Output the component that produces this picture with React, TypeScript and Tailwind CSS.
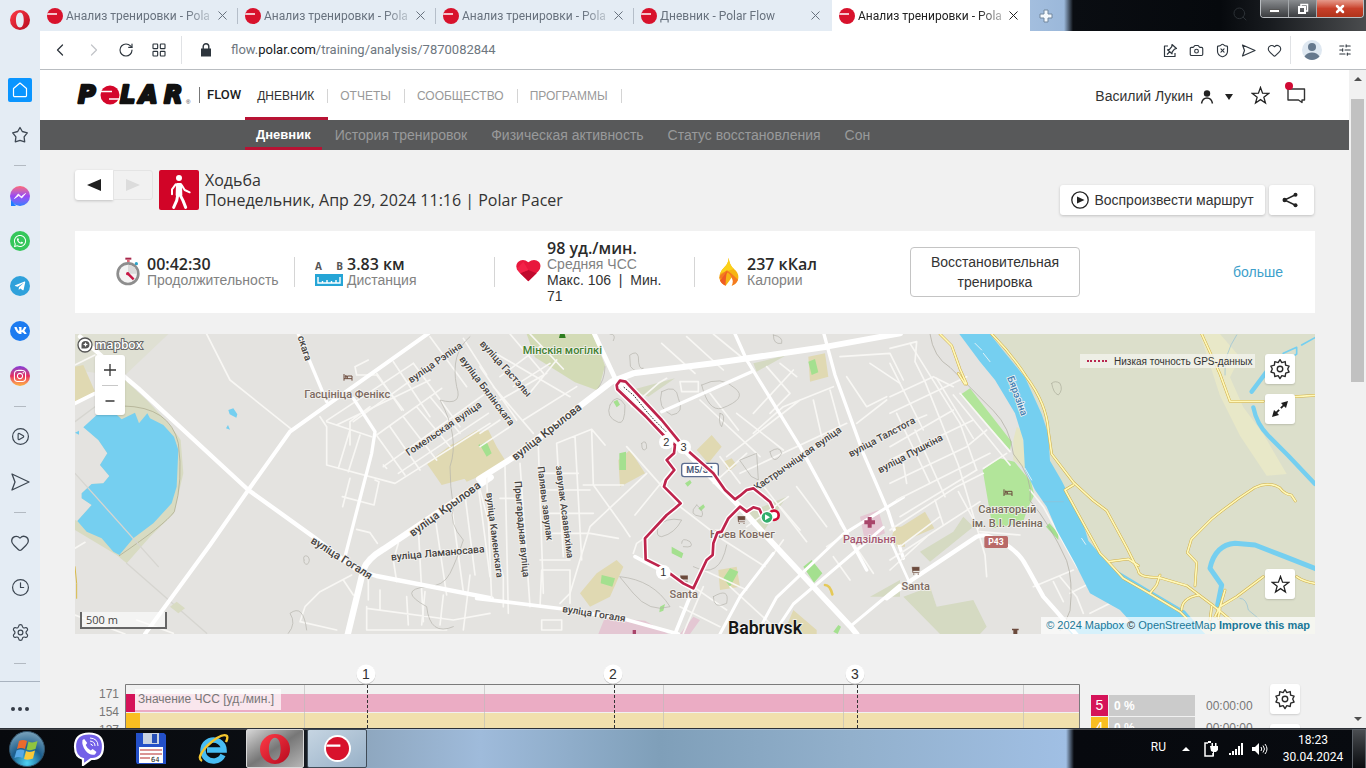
import React from "react";
import {
  Camera,
  ChevronLeft,
  ChevronRight,
  CirclePlay,
  Clock3,
  Heart,
  LayoutGrid,
  RotateCw,
  Search,
  Settings,
  ShieldX,
  SlidersHorizontal,
  X,
} from "lucide-react";
import { FaInstagram, FaTelegramPlane, FaVk, FaWhatsapp } from "react-icons/fa";

const UI = "font-['Open_Sans','Noto_Sans',sans-serif]";
const CHROME = "font-['Roboto','Noto_Sans',sans-serif]";
const ARIAL = "font-['Liberation_Sans',Arial,sans-serif]";

function OperaO({ className }: { className: string }) {
  return (
    <svg viewBox="0 0 32 32" className={className} aria-hidden="true">
      <defs>
        <linearGradient id="operaRed" x1="0" y1="0" x2="1" y2="1">
          <stop offset="0" stopColor="#ff3b47" />
          <stop offset="1" stopColor="#b60a1e" />
        </linearGradient>
      </defs>
      <path
        fillRule="evenodd"
        fill="url(#operaRed)"
        d="M16 0a16 16 0 1 0 0 32a16 16 0 1 0 0-32ZM16 4c4 0 6 5.500 6 12s-2 12-6 12s-6.500-5.500-6.500-12S12 4 16 4Z"
      />
    </svg>
  );
}

function PolarDot({ className }: { className: string }) {
  return (
    <svg viewBox="0 0 16 16" className={className} aria-hidden="true">
      <circle cx="8" cy="8" r="8" fill="#d8122c" />
      <path d="M0.500 5.200h9.500v1.500H0.200z" fill="#fff" />
    </svg>
  );
}

function GearIcon({ className }: { className: string }) {
  return (
    <svg viewBox="0 0 24 24" className={className} fill="none" stroke="#2a2a2a" strokeWidth="1.500" strokeLinejoin="round" aria-hidden="true">
      <path d="M12 1.800l2 3.200 3.700-1.100 .4 3.900 3.800 1.100-1.500 3.100 1.500 3.300-3.700 1.200-.5 3.700-3.700-.9-2 3.200-2-3.200-3.700.9-.5-3.700-3.700-1.200 1.500-3.300-1.500-3.100 3.800-1.100.4-3.900L10 5z" />
      <circle cx="12" cy="12" r="3" />
    </svg>
  );
}

function StarIcon({ className }: { className: string }) {
  return (
    <svg viewBox="0 0 24 24" className={className} fill="none" stroke="#222" strokeWidth="1.600" aria-hidden="true">
      <path d="M12 1.800l2.600 7.300 7.600.3-6 4.700 2.100 7.300-6.300-4.200-6.300 4.200 2.100-7.300-6-4.700 7.600-.3z" />
    </svg>
  );
}

/* ---------- Browser chrome ---------- */

function SideItem({ label, children }: { label: string; children: React.ReactNode }) {
  return (
    <button aria-label={label} className="flex h-[45px] w-full shrink-0 items-center justify-center text-[#3d4752]">
      {children}
    </button>
  );
}

function SideDivider() {
  return (
    <div className="flex h-4 shrink-0 items-center justify-center">
      <div className="h-px w-3 bg-[#b3bac2]" />
    </div>
  );
}

function Badge({ color, children }: { color: string; children: React.ReactNode }) {
  return <span className={`flex size-5 items-center justify-center rounded-full text-white ${color}`}>{children}</span>;
}

function Sidebar() {
  return (
    <aside className="flex w-10 shrink-0 flex-col bg-[#e4ecf4]">
      <button aria-label="Opera" className="flex h-[67px] shrink-0 justify-center pt-[10px]">
        <OperaO className="size-5" />
      </button>
      <SideItem label="Home">
        <span className="flex size-6 items-center justify-center rounded-[2px] bg-[#0a95ff] text-white">
          <svg viewBox="0 0 16 16" className="size-4" fill="none" stroke="currentColor" strokeWidth="1.200" strokeLinejoin="round" aria-hidden="true">
            <path d="M1.500 6.500L8 1l6.500 5.500V13.500a1.200 1.200 0 0 1-1.200 1.200H2.700a1.200 1.200 0 0 1-1.200-1.200z" />
          </svg>
        </span>
      </SideItem>
      <SideItem label="Bookmarks">
        <svg viewBox="0 0 18 18" className="size-[18px]" fill="none" stroke="currentColor" strokeWidth="1.300" strokeLinejoin="round" aria-hidden="true">
          <path d="M9 1.500l2.300 4 5 1.300-3.200 4 .6 5L9 14.300l-4.700 1.500.6-5-3.200-4 5-1.300z" />
        </svg>
      </SideItem>
      <SideDivider />
      <SideItem label="Messenger">
        <Badge color="bg-gradient-to-t from-[#1c7dff] via-[#9a45f2] to-[#ff6573]">
          <svg viewBox="0 0 20 20" className="size-5" aria-hidden="true">
            <path d="M1 14v6h5z" fill="#1c7dff" />
            <path d="M4.500 12.500L8.300 8l2.900 2.700L15.500 7.500 11.700 12 8.800 9.500z" fill="#fff" stroke="#fff" strokeWidth=".8" strokeLinejoin="round" />
          </svg>
        </Badge>
      </SideItem>
      <SideItem label="WhatsApp">
        <Badge color="bg-[#35c75a]">
          <FaWhatsapp className="size-[14px]" />
        </Badge>
      </SideItem>
      <SideItem label="Telegram">
        <Badge color="bg-[#2fa1db]">
          <FaTelegramPlane className="mr-px size-3" />
        </Badge>
      </SideItem>
      <SideItem label="VK">
        <Badge color="bg-[#1c7bf0]">
          <FaVk className="size-[13px]" />
        </Badge>
      </SideItem>
      <SideItem label="Instagram">
        <Badge color="bg-gradient-to-t from-[#fdb43c] via-[#e5275f] to-[#8433d8]">
          <FaInstagram className="size-[14px]" />
        </Badge>
      </SideItem>
      <SideDivider />
      <SideItem label="Player">
        <CirclePlay className="size-[19px]" strokeWidth={1.5} />
      </SideItem>
      <SideItem label="My Flow">
        <svg viewBox="0 0 20 20" className="size-5" fill="none" stroke="currentColor" strokeWidth="1.300" strokeLinejoin="round" aria-hidden="true">
          <path d="M2 2l17 8L2 18l3-8z" />
        </svg>
      </SideItem>
      <SideDivider />
      <SideItem label="Favourites">
        <Heart className="size-5" strokeWidth={1.5} />
      </SideItem>
      <SideItem label="History">
        <Clock3 className="size-[19px]" strokeWidth={1.5} />
      </SideItem>
      <SideItem label="Settings">
        <Settings className="size-[19px]" strokeWidth={1.5} />
      </SideItem>
      <SideDivider />
      <div className="mt-[10px] flex flex-1 justify-center border-t border-[#a9b3bf] pt-[25px]">
        <button aria-label="More" className="flex h-1 gap-[3px]">
          <span className="size-1 rounded-full bg-[#343c46]" />
          <span className="size-1 rounded-full bg-[#343c46]" />
          <span className="size-1 rounded-full bg-[#343c46]" />
        </button>
      </div>
    </aside>
  );
}

const tabs = [
  { title: "Анализ тренировки - Pola", active: false },
  { title: "Анализ тренировки - Pola", active: false },
  { title: "Анализ тренировки - Pola", active: false },
  { title: "Дневник - Polar Flow", active: false },
  { title: "Анализ тренировки - Pola", active: true },
];

function TabStrip() {
  return (
    <div className={`flex h-[31px] shrink-0 bg-[#e4ecf4] text-[12px] ${CHROME}`}>
      {tabs.map((t, i) => (
        <div
          key={i}
          className={`flex w-[198px] shrink items-center pl-[7px] pr-[9px] ${
            t.active ? "bg-white text-[#222]" : "text-[#68727e]"
          }`}
        >
          <PolarDot className="size-4 shrink-0" />
          <button className="ml-[3px] mr-auto text-left whitespace-nowrap [mask-image:linear-gradient(to_right,#000_120px,rgba(0,0,0,0.3)_144px)]">
            {t.title}
          </button>
          <button aria-label="Close tab" className="flex size-4 items-center justify-center">
            <X className="size-[15px]" strokeWidth={1.6} />
          </button>
          {i < 3 && <span className="ml-[7px] -mr-[9px] h-4 w-px bg-[#b5bec9]" />}
        </div>
      ))}
      <div className="flex min-w-0 flex-1 items-start bg-[linear-gradient(to_right,#a3bede_0px,#9bb8da_34px,#0a0d12_43px,#06090d_190px,#181b1f_240px,#4a4c4e_100%)]">
        <button aria-label="New tab" className="flex h-[31px] w-8 items-center justify-center">
          <svg viewBox="0 0 14 14" className="size-[14px]" aria-hidden="true">
            <path d="M5 1h4v4h4v4H9v4H5V9H1V5h4z" fill="#f4f8fc" stroke="#71869d" strokeWidth="1" />
          </svg>
        </button>
        <Search className="mt-[6px] mr-3 ml-auto size-4 text-[#2c3136]" strokeWidth={1.5} />
        <div className="mr-[2px] flex h-[18px] overflow-hidden rounded-b-[4px] border border-t-0 border-[#b9bdc1]">
          <button aria-label="Minimize" className="flex w-7 items-center justify-center border-r border-[#a4a8ab] bg-gradient-to-b from-[#8a8d90] to-[#3b3d40]">
            <span className="mt-1 h-1 w-[11px] border border-[#555] bg-white" />
          </button>
          <button aria-label="Restore" className="flex w-7 items-center justify-center border-r border-[#a4a8ab] bg-gradient-to-b from-[#8a8d90] to-[#3b3d40]">
            <svg viewBox="0 0 12 12" className="size-3" fill="none" stroke="#fff" strokeWidth="2" aria-hidden="true">
              <path d="M4 3V1.500h6.500V8H9" strokeWidth="1.500" />
              <path d="M2 4h6v6H2z" />
            </svg>
          </button>
          <button aria-label="Close" className="flex w-[46px] items-center justify-center bg-gradient-to-b from-[#e59a8b] via-[#c8402a] to-[#b0341b]">
            <X className="size-3 text-white" strokeWidth={5} />
          </button>
        </div>
      </div>
    </div>
  );
}

function AddressBar() {
  const icon = "size-[15px]";
  return (
    <div className="flex h-[39px] shrink-0 items-center border-b border-[#b9bdc1] bg-white pr-[14px] text-[#2d353d]">
      <button aria-label="Back" className="ml-[10px]"><ChevronLeft className="size-5" strokeWidth={1.5} /></button>
      <button aria-label="Forward" className="ml-[14px] text-[#c2c5c9]"><ChevronRight className="size-5" strokeWidth={1.5} /></button>
      <button aria-label="Reload" className="ml-[14px]"><RotateCw className="size-4" strokeWidth={1.7} /></button>
      <button aria-label="Speed dial" className="ml-[17px]"><LayoutGrid className="size-4" strokeWidth={1.7} /></button>
      <div className="ml-[14px] h-7 w-px bg-[#e0e2e5]" />
      <svg viewBox="0 0 12 14" className="ml-[18px] h-[14px] w-3" aria-label="Secure">
        <path d="M1 5.500h10v8H1z" fill="#2d353d" />
        <path d="M3.200 6V3.500a2.800 2.800 0 0 1 5.600 0V6" fill="none" stroke="#2d353d" strokeWidth="1.400" />
      </svg>
      <div className={`ml-[19px] flex-1 text-[13px] text-[#6e7780] ${CHROME}`}>
        flow.<span className="text-[#15191d]">polar.com</span>/training/analysis/7870082844
      </div>
      <div className="flex items-center gap-[11px]">
        <button aria-label="Share page">
          <svg viewBox="0 0 15 15" className={icon} fill="none" stroke="currentColor" strokeWidth="1.200" strokeLinejoin="round" aria-hidden="true">
            <path d="M5 3H1.500v10.500H12V10" />
            <path d="M9 1.500l4.500 4-2 .6-2.300 2.700-.2 2-4.500-4 2-.4L8.800 3.600zM6.600 8.800L4 11.500" />
          </svg>
        </button>
        <button aria-label="Snapshot"><Camera className={icon} strokeWidth={1.8} /></button>
        <button aria-label="Tracker blocker"><ShieldX className={icon} strokeWidth={1.8} /></button>
        <button aria-label="Send">
          <svg viewBox="0 0 15 15" className={icon} fill="none" stroke="currentColor" strokeWidth="1.200" strokeLinejoin="round" aria-hidden="true">
            <path d="M1.500 2l12.500 5.500-12.500 5.500 2-5.500z" />
          </svg>
        </button>
        <button aria-label="Favourite"><Heart className={icon} strokeWidth={1.8} /></button>
      </div>
      <div className="ml-2 h-7 w-px bg-[#e0e2e5]" />
      <button aria-label="Profile" className="ml-[11px]">
        <svg viewBox="0 0 20 20" className="size-5" aria-hidden="true">
          <circle cx="10" cy="10" r="10" fill="#dfe8f1" />
          <circle cx="10" cy="7" r="4" fill="#66798d" />
          <path d="M2.500 16.500Q5 12.500 10 12.500t7.500 4A10 10 0 0 1 2.500 16.500z" fill="#66798d" />
        </svg>
      </button>
      <button aria-label="Easy setup" className="ml-4"><SlidersHorizontal className="size-[14px]" strokeWidth={1.8} /></button>
    </div>
  );
}

/* ---------- Site header ---------- */

function SiteLogo() {
  return (
    <a href="#" aria-label="Polar" className="block">
      <svg viewBox="0 0 116 24" className="h-6 w-[116px]">
        <g className="font-['DejaVu_Sans',sans-serif] text-[24px] font-bold italic" fill="#111" stroke="#111" strokeWidth="2.500" strokeLinejoin="round">
          <text x="2" y="20">P</text>
          <text x="44" y="20">L</text>
          <text x="63" y="20">A</text>
          <text x="88" y="20">R</text>
        </g>
        <circle cx="34" cy="12" r="9.500" fill="#d4062b" />
        <path d="M24 8.500h12M33 16h11" stroke="#fff" strokeWidth="1.400" />
        <text x="110" y="21" className="font-['Liberation_Sans',sans-serif] text-[6px]" fill="#333">®</text>
      </svg>
    </a>
  );
}

function SiteHeader() {
  const items = ["ДНЕВНИК", "ОТЧЕТЫ", "СООБЩЕСТВО", "ПРОГРАММЫ"];
  const sub = ["Дневник", "История тренировок", "Физическая активность", "Статус восстановления", "Сон"];
  return (
    <header className={`shrink-0 ${ARIAL}`}>
      <div className="flex h-[50px] bg-white pl-9 pr-[42px]">
        <div className="flex items-center">
          <SiteLogo />
          <div className="ml-[7px] h-4 w-px bg-[#777]" />
          <span className="ml-[7px] font-['Roboto',sans-serif] text-[13px] font-medium text-[#1d1d1d]">FLOW</span>
        </div>
        <nav className="ml-1 flex items-stretch text-[12px]">
          {items.map((n, i) => (
            <a
              key={n}
              href="#"
              className={`flex items-center border-b-[3px] pt-1 ${
                i === 0 ? "border-[#b81334] text-[#333]" : "border-transparent text-[#999]"
              }`}
            >
              <span className="pr-[13px] pl-3">{n}</span>
              <span className="h-[14px] w-px bg-[#d4d4d4]" />
            </a>
          ))}
        </nav>
        <div className="ml-auto flex items-center text-[14px] text-[#333]">
          <button className="mt-[3px] flex items-center">
            Василий Лукин
            <svg viewBox="0 0 14 14" className="ml-[7px] size-[14px]" aria-hidden="true">
              <circle cx="7" cy="3.500" r="3.200" fill="#222" />
              <path d="M1.500 13.500Q2.500 8 7 8t5.500 5.500" fill="none" stroke="#222" strokeWidth="1.400" />
            </svg>
            <span className="ml-[11px] border-x-4 border-t-[6px] border-x-transparent border-t-[#222]" />
          </button>
          <button aria-label="Favourites" className="ml-[18px]">
            <StarIcon className="size-[19px]" />
          </button>
          <button aria-label="Notifications" className="relative ml-[15px]">
            <svg viewBox="0 0 22 18" className="h-[18px] w-[22px]" fill="none" stroke="#333" strokeWidth="1.400" aria-hidden="true">
              <path d="M3 3h16.500v11H17v2.500L13.500 14H3z" strokeLinejoin="round" />
            </svg>
            <span className="absolute -top-1 left-0 size-2 rounded-full bg-[#d10a34]" />
          </button>
        </div>
      </div>
      <nav className="flex h-[30px] bg-[#58595a] pl-[205px] text-[14px]">
        {sub.map((n, i) => (
          <a
            key={n}
            href="#"
            className={`mr-[2px] flex items-center border-b-[3px] px-[11px] pt-[3px] ${
              i === 0 ? "border-[#b81334] text-[13px] font-bold text-white" : "border-transparent text-[#999a9b]"
            }`}
          >
            {n}
          </a>
        ))}
      </nav>
    </header>
  );
}

/* ---------- Training heading and summary ---------- */

function TrainingHeading() {
  return (
    <div className="flex items-start pt-5">
      <div className="flex">
        <button aria-label="Previous" className="flex h-[30px] w-[38px] items-center justify-center rounded-l-[3px] bg-white shadow-[0_1px_3px_rgba(0,0,0,0.2)]">
          <svg viewBox="0 0 14 12" className="h-3 w-[14px]" aria-hidden="true"><path d="M14 0v12L0 6z" fill="#1f1f1f" /></svg>
        </button>
        <button aria-label="Next" className="flex h-[30px] w-10 items-center justify-center rounded-r-[3px] border border-[#e4e4e4] bg-[#f1f1f1]">
          <svg viewBox="0 0 14 12" className="h-3 w-[14px]" aria-hidden="true"><path d="M0 0v12L14 6z" fill="#dcdcdc" /></svg>
        </button>
      </div>
      <svg viewBox="0 0 120 120" className="ml-[6px] size-10 shrink-0" role="img" aria-label="Ходьба">
        <rect width="120" height="120" rx="6" fill="#d10427" />
        <g fill="none" stroke="#fff" strokeLinecap="round" strokeLinejoin="round">
          <circle cx="60" cy="24" r="9" fill="#fff" stroke="none" />
          <path d="M55 43h10l1 32H54z" fill="#fff" strokeWidth="8" />
          <path d="M50 43L39 58v15" strokeWidth="6" />
          <path d="M68 45l9 15 15 7" strokeWidth="6" />
          <path d="M56 76L53 92 44 112" strokeWidth="9" />
          <path d="M64 76l8 16 8 20" strokeWidth="9" />
        </g>
      </svg>
      <div className={`ml-[6px] text-[16px] leading-5 text-[#333] ${UI}`}>
        <h1>Ходьба</h1>
        <div>Понедельник, Апр 29, 2024 11:16 | Polar Pacer</div>
      </div>
      <div className={`mt-[15px] mr-px ml-auto flex gap-1 text-[14px] text-[#333] ${ARIAL}`}>
        <button className="flex h-[30px] w-[205px] items-center justify-center gap-[5px] rounded-[3px] bg-white shadow-[0_1px_3px_rgba(0,0,0,0.2)]">
          <svg viewBox="0 0 18 18" className="size-[18px]" aria-hidden="true">
            <circle cx="9" cy="9" r="8.200" fill="none" stroke="#222" strokeWidth="1.300" />
            <path d="M6 5.500v7L13.500 9z" fill="#222" />
          </svg>
          Воспроизвести маршрут
        </button>
        <button aria-label="Share" className="flex h-[30px] w-[45px] items-center justify-center rounded-[3px] bg-white pr-1 shadow-[0_1px_3px_rgba(0,0,0,0.2)]">
          <svg viewBox="0 0 16 16" className="size-4" aria-hidden="true">
            <path d="M14 2.500L2.500 8 14 13.500" fill="none" stroke="#222" strokeWidth="1.400" />
            <g fill="#222"><circle cx="2.700" cy="8" r="2.200" /><circle cx="13.500" cy="2.700" r="2" /><circle cx="13.500" cy="13.300" r="2" /></g>
          </svg>
        </button>
      </div>
    </div>
  );
}

function StopwatchIcon() {
  return (
    <svg viewBox="0 0 84 90" className="h-[30px] w-7" aria-hidden="true">
      <rect x="31" y="2" width="18" height="6" fill="#a8274b" />
      <rect x="36" y="8" width="8" height="8" fill="#e06b78" />
      <circle cx="64" cy="20" r="5" fill="#2ba4c9" />
      <circle cx="39" cy="50" r="31" fill="#f3f3f3" stroke="#8d8d8d" strokeWidth="8" />
      <path d="M39 23a27 27 0 0 1 27 27H39z" fill="#dadada" />
      <path d="M38 49l18 18" stroke="#c71745" strokeWidth="7" />
      <circle cx="38" cy="50" r="5" fill="#c71745" />
    </svg>
  );
}

function RulerIcon() {
  return (
    <span className="flex w-7 flex-col font-['Open_Sans',sans-serif] text-[10px] leading-4 font-bold text-[#555]">
      <span className="flex justify-between"><span>A</span><span>B</span></span>
      <svg viewBox="0 0 28 12" className="h-3 w-7" aria-hidden="true">
        <path d="M0 0h28v12H0z" fill="#25a5d6" />
        <path d="M3 3v6h22V3M7.500 9V7M12 9V6M16.500 9V7M21 9V6" fill="none" stroke="#fff" strokeWidth="1.400" />
      </svg>
    </span>
  );
}

function HeartIcon() {
  return (
    <svg viewBox="0 0 84 78" className="mb-1 h-[26px] w-7" aria-hidden="true">
      <path d="M40 73L10 42Q-2 28 9 15 24 2 40 16 57 2 72 15 82 28 70 43z" fill="#e8173d" />
      <path d="M40 39l25 10-25 24-25-24z" fill="#c00a2d" />
      <path d="M40 39L15 49 5 36 25 14z" fill="#f32248" />
    </svg>
  );
}

function FlameIcon() {
  return (
    <svg viewBox="0 0 60 90" className="h-[30px] w-5" aria-hidden="true">
      <path d="M29 2Q31 24 45 36 62 50 57 68 52 81 38 86 46 74 39 60 30 74 20 86 4 80 1 64 0 47 16 31 28 20 29 2z" fill="#f6b414" />
      <path d="M29 2Q31 24 45 36L4 49Q8 38 16 31 28 20 29 2z" fill="#fbd119" />
      <path d="M1 64Q13 67 25 47 33 49 37 61 46 74 38 86 52 81 57 68L38 50 24 40 4 54z" fill="#f47a20" />
      <path d="M3 70Q15 58 24 42 19 70 20 86 7 82 3 70z" fill="#ef5b24" />
    </svg>
  );
}

function Metric({
  icon,
  value,
  label,
  extra,
  last,
}: {
  icon: React.ReactNode;
  value: string;
  label: string;
  extra?: string;
  last?: boolean;
}) {
  return (
    <div className="flex w-[200px] items-center">
      <div className="ml-5 flex w-7 justify-center">{icon}</div>
      <div className="ml-1 min-w-0 flex-1 text-[14px] leading-4">
        <div className={`text-[16px] leading-4 font-semibold text-[#2b2b2b] ${UI}`}>{value}</div>
        <div className="text-[#828282]">{label}</div>
        {extra && <div className="w-32 text-[#333]">{extra}</div>}
      </div>
      {!last && <div className="h-[30px] w-px bg-[#d5d5d5]" />}
    </div>
  );
}

function Summary() {
  return (
    <section className={`mt-4 flex h-[82px] shrink-0 items-center bg-white pl-5 ${ARIAL}`}>
      <Metric icon={<StopwatchIcon />} value="00:42:30" label="Продолжительность" />
      <Metric icon={<RulerIcon />} value="3.83 км" label="Дистанция" />
      <Metric icon={<HeartIcon />} value="98 уд./мин." label="Средняя ЧСС" extra={"Макс. 106\u00a0 |\u00a0 Мин. 71"} />
      <Metric icon={<FlameIcon />} value="237 кКал" label="Калории" last />
      <button className="ml-[15px] h-[50px] w-[170px] rounded-[4px] border border-[#c4c4c4] px-4 text-[14px] leading-5 text-[#333]">
        Восстановительная тренировка
      </button>
      <a href="#" className="mr-8 ml-auto text-[14px] text-[#3d9fcb]">больше</a>
    </section>
  );
}

/* ---------- Map ---------- */

type LabelProps = { x: number; y: number; r?: number; s?: number; c?: string; bold?: boolean; children: string };

function MapLabel({ x, y, r = 0, s = 33, c = "#45423f", bold, children }: LabelProps) {
  return (
    <text
      transform={`translate(${x} ${y}) rotate(${r})`}
      dy="11"
      textAnchor="middle"
      fontSize={s}
      fontWeight={bold ? 600 : 500}
      fill={c}
      stroke="#f3f2ef"
      strokeWidth="5"
      paintOrder="stroke"
    >
      {children}
    </text>
  );
}

function Cart({ x, y }: { x: number; y: number }) {
  return (
    <g transform={`translate(${x} ${y})`} fill="#6b4a3c" stroke="#f3f2ef" strokeWidth="1">
      <path d="M0 2h24v13H5v3h18v3H2zM4 22h4v4H4zM18 22h4v4h-4z" />
    </g>
  );
}

function Bed({ x, y }: { x: number; y: number }) {
  return (
    <g transform={`translate(${x} ${y})`} fill="none" stroke="#6b4a3c" strokeWidth="3">
      <path d="M2 0v20M2 14h24v6M26 14V6H12v8M6 5h3v5H6z" />
    </g>
  );
}

function MapArt() {
  return (
    <svg
      viewBox="225 1002 3720 900"
      preserveAspectRatio="xMidYMid slice"
      className="block h-full w-full font-['Roboto','Noto_Sans',sans-serif]"
      role="img"
      aria-label="Карта маршрута"
    >
      <rect x="225" y="1002" width="3720" height="900" fill="#e4e3e0" />

      {/* West: reservoir and allotments */}
      <g transform="translate(210 990)" fill="none" strokeLinecap="round" strokeLinejoin="round">
        <path d="M165 150L230 210 300 285 332 330 340 430 312 550 240 620 170 700 140 675 15 600V560L80 250z" fill="#d8dbc2" />
        <path d="M15 290L40 292 85 330 112 370 90 405 118 438 100 460 65 462 35 490 35 505 65 525 22 573 15 570z" fill="#e4e3e0" />
        <path d="M15 12h280L160 140 15 120z" fill="#dfe0d3" />
        <path d="M15 110l25-5 35 80-60 30z" fill="#e0d9b2" />
        <path d="M80 255l50-10 25 23 40-20 12 32 25-30 8 15 40 20 32 35 13 40-5 110-15 50-55 60-60 45-42 50-18-10-35-40-45-20-28-32 43-48-30-20V490l30-28 35-2 18-22-28-33 22-35-27-40-45-38z" fill="#75cff0" />
        <path d="M475 240l15-5 12 18-3 10-20-10zM468 295l6-10 6 14zM15 308l12-6v12z" fill="#75cff0" />
        <path d="M160 228Q300 230 325 340q15 110-12 205-30 40-165 132" stroke="#a8a588" strokeWidth="2" />
        <path d="M15 275l60-45M15 430l250 280M170 700l240 210" stroke="#d6d5d0" strokeWidth="4" />
        <path d="M1070 400l80-60 40 105-75 20z M1140 350l80-50 40 25v100l-70 30-40-60z" fill="#e0d9b2" />
        <path d="M1225 345l20-10 25 35-20 15z" fill="#9fdc8c" />
        <path d="M300 830l20-15 25 20-20 15z" fill="#d8dbc2" />

        <g stroke="#f8f7f4" strokeWidth="5">
          <path d="M410 12l70 138 185 148M895 90l-40 20 5 25 60 0L1000 240M15 105l60-30M15 655l30-18" />
          <path d="M770 272L1030 100M800 285l280-135M840 345L840 275 900 230M920 315l195-140M940 410l300-215M985 430l270-180" />
          <path d="M920 130l75 110M970 95l110 165M1030 100l140 190M1080 20l110 150M1180 25l70 110M1150 60l-300 215" />
          <path d="M750 260l20 30 0 115 205 55 285-180M770 275l135 45M840 300L805 415M870 315L835 425M915 450l12 5-15 70-95-25M840 445l-22 85" />
          <path d="M915 310l90 125M960 290l90 130M1000 260l100 130M1040 230l100 120M1080 200l90 110M940 405l10 10" />
          <path d="M860 598l40 10 22 32M1045 595l15 280M1095 560l35 235M1145 530l35 255M1185 495l30 240M1225 470l35 270M985 640l-15 50 10 65M1200 735l-20 165" />
          <path d="M15 855l150 57M200 870l110 40M845 735L750 785 705 830 690 875 800 900M820 750l30 45M895 740v70M930 780v60M890 835l260 35 110-20M890 830v70h240M1010 800l5 85M1065 785l-10 100M1120 795l-10 90" />
        </g>
        <g stroke="#b4b2aa" strokeWidth="2">
          <path d="M1200 20q-60 50-40 150 20 60-50 40 60 110 30 200 0 60 10 120-15 50 30 100-20 60-40 100-20 40-70 40-90 10 0 60 10 90 80 60" />
          <path d="M702 690q-5-15 10-12 12 12 0 25-12 0-10-13M655 910q25-30 5-60 40-30 50 50" />
        </g>
        <path d="M15 710l5 50v45" stroke="#d8b948" strokeWidth="3" />
        <g stroke="#fff">
          <path d="M15 220l60-30" strokeWidth="11" />
          <path d="M30 20l145 130 30 25 330 305 195 140 130 100 60 18 345 67" strokeWidth="13" />
          <path d="M225 912l195-267 115-165 125-175 140-100L1075 10" strokeWidth="12" />
          <path d="M685 12l85 203M850 205l65 100-10 65-80 310" strokeWidth="10" />
          <path d="M833 914l47-194q10-32 60-62L1262 442" strokeWidth="19" />
        </g>
      </g>

      {/* Centre of the town */}
      <g transform="translate(1440 990)" fill="none" strokeLinecap="round" strokeLinejoin="round">
        <path d="M140 12h200l35 95-20 75-70-25-120-75z" fill="#d3dbb6" />
        <g fill="#e0d9b2">
          <path d="M0 305l25-5 25 50 25 40-75 50zM415 390l35-30 45 70-75 40zM650 360l45-45 30 35-40 50zM730 395l25-10 15 20-25 20zM985 80l50-10 10 70-55 15zM300 790l50-60 60-40 20 20-40 90-60 30zM715 720l55-10 10 60-60 10zM940 840l70 60v12h-100zM1245 590h30v60h-25z" />
        </g>
        <g fill="#a4e08f">
          <path d="M0 345l20-10 15 35-15 10zM418 370l20-5v55h-20zM985 95l20-8 10 40-20 8zM365 735l40 10-8 25-35-10zM575 650l35 20-5 15-30-15zM730 745l20-30 25 10-25 45zM970 710l25-20 32 40-25 28zM400 215l12-6 8 15-10 8zM615 460l15-10 5 8-12 12zM655 535l15-12 5 8-12 12zM540 830l15-8-5 20-12 5zM1060 905l15-20 8 5-10 22z" />
        </g>
        <path d="M375 862l120 10 70 40H355zM640 860l20 10-30 42h-30zM1140 560l55-20 20 70-60 25z" fill="#e4c7d3" />
        <path d="M455 180l130-35-80 55zM820 100l100-25-90 50zM800 550l120-50-80 120zM1170 800l90-50v50z" fill="#d5dac2" />

        <g stroke="#f8f7f4" strokeWidth="5">
          <path d="M90 12L190 130M150 12l100 105M0 110l110 160M40 170l120 140M100 170l110-70M60 210L200 130M130 270L290 170M0 350l90-60M0 310l60-40M30 60L270 200M180 50L60 140M230 90l-90 110" />
          <path d="M230 340L335 298 375 345M335 300l5 165 90 125 20 30M175 350l15 440M230 340l20 340M285 320l20 370M75 410l10 440M20 440l15 370M120 400l30 430M195 430h100M190 480h140M190 550h150M200 610h130l85 15M180 690h90M190 720h80v100M180 830l5-110M60 505h65M310 465h120M0 480l70 260 0 90M185 870h60v30h-60z" />
          <path d="M440 350l160 180 130 100 125 80M500 430L330 590 270 790 240 820M575 420L465 555M460 670L470 640 500 620" />
          <path d="M455 230l80-70 25-15M600 155h55v30h-50zM545 40l100 90M620 20l110 100M700 12l110 90M660 210l180 170M690 190l85 110M820 310L910 230 1060 170M740 380L960 210M780 430L1100 280M770 250l140 110M820 250L940 120M860 110l70 80-60 60M900 100l50 40" />
          <path d="M925 500L800 590M840 455l140 180M950 470l90 120M1050 180l30 110M1000 210l25 110M1100 140l60 90 60-30M1170 100l90 60M1080 80l150-10 40 80M1070 300l-140 110M1130 280l90-70" />
          <path d="M700 460l100-90M720 380l60 80M640 770l100 70M600 830l120 60M670 720l130 60M670 770l-60 140M750 770l120 110M1040 650l90-60M1080 580l100 150M1060 680l50 70M900 530l60 70M860 700l50-70" />
        </g>
        <g stroke="#b4b2aa" strokeWidth="2">
          <path d="M450 75q20-15 25 5 0 40 15 35-20 20-38-5zM390 12q20 0 10 20M880 15q30 5 25 25-25 5-25-25M390 225q20-40 45 0 0 60-20 52-40-15-25-52M545 185q45-25 50 20 20 45-20 50-45-20-30-70M665 165q60-30 100 10 40 30-40 60-40 10-60-70M720 250q20 0 5 40-10-10-5-40M485 340q15-15 15 15-15 15-15-15M650 525q25 20 15 35-45-5-15-35M535 590q20-30 70-20-20 40-60 50-20 0-10-30M605 640q0-20 25-5 15 20-20 15M780 390l50-20 5 80-20-10zM870 365q30-20 35 5-25 40-35-5M420 740q100 10 150 90-60 20-110-40zM700 800q50-30 40 20-40 20-40-20M640 710q80 40 100-65M350 180q25-30 25-70" />
        </g>
        <g stroke="#fff">
          <path d="M340 5l65 140" strokeWidth="14" />
          <path d="M-3 447l103-65L395 155l65-25 240-30 340-50 220-40" strokeWidth="18" />
          <path d="M545 245l270-120M762 5l38 85L960 350l60 110 140 260M1030 5l35 130L1150 370l75 175 45 140" strokeWidth="10" />
          <path d="M410 150L770 520l90 100L1110 888l20 24" strokeWidth="17" />
          <path d="M-10 805l260 32 190 32 155 43M465 680l175 92M640 775L585 912" strokeWidth="11" />
          <path d="M720 912L780 800 880 670M830 912l60-110 200-190 180-110M880 912l60-90 270-230M1110 890l150-125M790 912l70-30" strokeWidth="9" />
        </g>
        <path d="M1035 765q15 0 22 28" stroke="#e5c958" strokeWidth="8" />
      </g>

      {/* River, forest and floodplain */}
      <g transform="translate(2670 990)" fill="none" strokeLinecap="round" strokeLinejoin="round">
        <path d="M290 12h990v900H870L690 790 560 610 490 430 440 230z" fill="#dcdfcb" />
        <path d="M930 12h60l60 70-30 60 40 90 60 80 70 120-60 5-80-120-60-120z" fill="#e8e8c8" />
        <path d="M210 195l30-20 125 160-5 25zM278 420l50-35 45 10 50 60 10 40-20 40-15 45-60 10-30 5z" fill="#b2e59a" />
        <path d="M468 590l10-10 27 30 0 20z" fill="#a4e08f" />
        <path d="M370 330l10-40 15 10 15 120-40-30z" fill="#e5e5c5" />
        <path d="M10 605l95-60 28 50-60 25-45 25-28-5z" fill="#e0d9b2" />
        <path d="M90 665l100-60 30-45 30 30-130 105zM40 800l80-30 20 60 110-20 40 80-20 22H150z" fill="#d5dac2" />
        <g stroke="#f8f7f4" strokeWidth="5">
          <path d="M0 55l80-20-5 60 30 60 100 250 80 270 5 65M0 200l130-60 60 30M0 250l230-110M0 300l110-45M0 350l190-110M0 390l250-120M0 460l230-110 60-50M20 510l280-140M30 560l230-140M0 600l200-130 80-40M0 690l270-175" />
          <path d="M60 40l150 240 50 140M0 100l100 200M20 250l100 210M40 400l10 60M140 145l110 180M75 300l90 200M135 510l25 75M205 485l60 110M190 195l170 210M350 370l-70 45M210 190l150 175M30 650l120-90M0 720l110-100" />
          <path d="M420 480l40 50 100 180 80 90 40 10M390 615l-120-10M430 770l120-50M490 755l30 60M510 740l50 60 20 50M540 790l60-30M600 850l80-40 60 60M650 810l-20-60M690 870l10 42" />
        </g>
        <path d="M120 12q10 70 60 100 60 60 130 130 50 50 60 130 60 70 50 140 60 70 110 180 20 60 10 150-20 50-30 60" stroke="#aaa89d" strokeWidth="2" />
        <path d="M208 12h92l40 50 65 80 50 110 20 60 5 80 35 60 65 130 15 50 70 80 100 60 120 70 60 70H755L690 840 600 790 555 700 500 600 470 530 435 480 405 420 400 330 375 250 315 150 270 95z" fill="#75cff0" />
        <path d="M255 40l20 20M280 70l20 25M575 625l12 18M405 415l20 35" stroke="#dff1f7" strokeWidth="3" />
        <path d="M530 895l355-32 60 49H545z" fill="#75cff0" />
        <g stroke="#75cff0">
          <path d="M1195 85L1130 125 1085 185M1090 232q10 50 45 85l60 60 80 85" strokeWidth="13" />
          <path d="M1180 70l40-18v20l-50 35zM1235 45l40-22" strokeWidth="5" />
          <path d="M1275 715l-90-35-90-35-60-5q-60 5-75 75l35 50-12 60" strokeWidth="15" />
        </g>
        <path d="M1040 15q-40 60-35 120M1050 805q20 0 25 35l30 25 30 40M520 515l-60 0" stroke="#8fc0d8" strokeWidth="2" />
        {["#cfae46", "#fff8b8"].map((c, i) => (
          <g key={c} stroke={c} strokeWidth={i === 0 ? 8 : 5}>
            <path d="M150 12l35 35 25 70 20 45M205 130l20 32M305 12q60 60 105 130 60 80 65 160l10 70 65 85 60 55 40 30 60 110 35 70q0 20 60 20l85 25q40 30 80 60l60 50" />
            <path d="M550 465l-25 15 55 100 50 90 25 25 60-8 30 20M640 680l60 65 70 40 100 60 20 20M810 735l-10 30-20 25M875 840q0-35 50-45M915 768l5-70-28-30 12-40 60-60q60-50 130-95 40-20 75 0 15 20 35 22l12 18" />
            <path d="M935 12l55 120 30 82h100M1215 200l60-4M990 830l50-30 60-45 20-15M1220 740q20 15 55 20M1005 780l-15 50-15 30M965 830l-5 40M990 835l-5 30" />
          </g>
        ))}
        <path d="M485 160q10-10 25 0 10 20-5 35-15-5-20-35" stroke="#a9aa99" strokeWidth="2" />
        <g stroke="#fff">
          <path d="M-10 805L65 750l195-130q20-8 40 0 80 30 110 90l50 90 40 45 60 70" strokeWidth="13" />
          <path d="M5 640l50 110" strokeWidth="8" />
        </g>
      </g>

      {/* Street and place names */}
      <g transform="translate(210 990)">
        <MapLabel x={705} y={54} r={72} s={30}>скага</MapLabel>
        <Bed x={820} y={132} />
        <MapLabel x={832} y={192} c="#7d6b62">Гасцініца Фенікс</MapLabel>
        <MapLabel x={1095} y={97} r={-35} s={30}>вуліца Рэпіна</MapLabel>
        <MapLabel x={1252} y={182} r={53} s={30}>вуліца Бялінскага</MapLabel>
        <MapLabel x={1120} y={295} r={-34} s={30}>Гомельская вуліца</MapLabel>
        <MapLabel x={1125} y={537} r={-36} s={34}>вуліца Крылова</MapLabel>
        <MapLabel x={1103} y={668} r={-5} s={31}>вуліца Ламаносава</MapLabel>
        <MapLabel x={815} y={684} r={32}>вуліца Гогаля</MapLabel>
      </g>
      <g transform="translate(1440 990)">
        <MapLabel x={78} y={115} r={48} s={30}>вуліца Гастэлы</MapLabel>
        <path d="M240 12h14l3 12h-20z" fill="#2e7d1f" />
        <MapLabel x={247} y={60} c="#44822f">Мінскія могілкі</MapLabel>
        <MapLabel x={200} y={306} r={-38} s={34}>вуліца Крылова</MapLabel>
        <MapLabel x={255} y={545} r={83} s={29}>завулак Асаавіяхіма</MapLabel>
        <MapLabel x={197} y={520} r={83} s={29}>Палявы завулак</MapLabel>
        <MapLabel x={127} y={597} r={85} s={30}>Прыгарадная вуліца</MapLabel>
        <MapLabel x={45} y={615} r={83} s={29}>вуліца Каменскага</MapLabel>
        <MapLabel x={342} y={850} r={9} s={30}>вуліца Гогаля</MapLabel>
        <MapLabel x={952} y={385} r={-35} s={30}>Кастрычніцкая вуліца</MapLabel>
        <MapLabel x={1205} y={320} r={-28} s={30}>вуліца Талстога</MapLabel>
        <MapLabel x={1290} y={370} r={-28} s={30}>вуліца Пушкіна</MapLabel>
        <MapLabel x={787} y={613} c="#7d6b62">Ноев Ковчег</MapLabel>
        <MapLabel x={611} y={792} c="#7d6b62">Santa</MapLabel>
        <MapLabel x={855} y={902} s={53} c="#151515" bold>Babruysk</MapLabel>
        <MapLabel x={1168} y={628} c="#a3566f">Радзільня</MapLabel>
        <path d="M1163 561h12v10h10v12h-10v10h-12v-10h-10v-12h10z" fill="#a8456a" />
        <path d="M458 900h10v12h-10z" fill="#a8456a" />
        <Cart x={772} y={556} />
        <Cart x={600} y={734} />
        <rect x="605" y="400" width="110" height="40" rx="8" fill="#fff" stroke="#5b6c8f" strokeWidth="4" />
        <text x="660" y="430" textAnchor="middle" fontSize="27" fontWeight="700" fill="#4d5a78">M5/Э1</text>
      </g>
      <g transform="translate(2670 990)">
        <MapLabel x={383} y={197} r={70} s={30} c="#3d7fb5">Бярэзіна</MapLabel>
        <Bed x={340} y={478} />
        <MapLabel x={352} y={538} c="#766a5c">Санаторый</MapLabel>
        <MapLabel x={352} y={581} c="#766a5c">ім. В.І. Леніна</MapLabel>
        <rect x="283" y="618" width="71" height="36" rx="5" fill="#b96a68" />
        <text x="318" y="645" textAnchor="middle" fontSize="26" fontWeight="700" fill="#fff">P43</text>
        <Cart x={65} y={708} />
        <MapLabel x={77} y={768} c="#7d6b62">Santa</MapLabel>
        <path d="M366 896h20v5h-4v12h-12v-12h-4z" fill="#6b4a3c" />
      </g>

      {/* Recorded route */}
      <g transform="translate(1440 990)" fill="none" strokeLinejoin="round" strokeLinecap="round">
        {["#ffffff", "#be244c"].map((c, i) => (
          <path
            key={c}
            stroke={c}
            strokeWidth={i === 0 ? 16 : 8}
            d="M878 532L870 515 820 475 800 480 780 497 765 508 735 480 700 430 610 350 590 325 545 270 437 155 420 152 410 165 412 178 500 262 550 315 585 345 582 370 560 390 583 420 558 450 552 470 602 520 585 535 560 555 495 625 497 688 545 712 610 760 640 775 680 690 698 675 700 640 712 608 725 605 745 565 780 530 800 545 820 532 838 537 845 552"
          />
        ))}
        <path d="M432 172L555 302" stroke="#fff" strokeWidth="14" />
        <path d="M432 172l30 25 40 50 20 22 35 35" stroke="#333" strokeWidth="3" strokeDasharray="3 6" />
        <circle cx="882" cy="556" r="14" fill="#fff" stroke="#d10a34" strokeWidth="8" />
        <circle cx="861" cy="562" r="18" fill="#33ae6c" stroke="#fff" strokeWidth="4" />
        <path d="M855 553v18l15-9z" fill="#fff" />
        {[
          [550, 727, "1"],
          [559, 336, "2"],
          [611, 351, "3"],
        ].map(([x, y, n]) => (
          <g key={n}>
            <circle cx={x} cy={y} r="22" fill="#fff" />
            <text x={x} y={Number(y) + 12} textAnchor="middle" fontSize="33" fill="#333" className="font-['Liberation_Sans',sans-serif]">{n}</text>
          </g>
        ))}
      </g>
    </svg>
  );
}

const mapBtn = "flex size-[30px] items-center justify-center rounded-[3px] bg-white shadow-[0_1px_2px_rgba(0,0,0,0.15)]";

function RouteMap() {
  return (
    <section className="relative mt-[21px] h-[300px] shrink-0 overflow-hidden">
      <MapArt />
      <div className="absolute top-[3px] left-[2px] flex items-center gap-[2px]">
        <svg viewBox="0 0 16 16" className="size-4" aria-hidden="true">
          <circle cx="8" cy="8" r="7" fill="#fff" stroke="#555" strokeWidth="1.300" />
          <path d="M4.500 11.500V7.500a4 3.800 0 1 1 4 4z" fill="#555" />
          <path d="M8.500 5l.8 1.700 1.700.8-1.700.8-.8 1.700-.8-1.700L6 7.500l1.700-.8z" fill="#fff" />
        </svg>
        <span className="font-['Open_Sans',sans-serif] text-[12px] leading-4 font-semibold text-white [paint-order:stroke] [-webkit-text-stroke:2px_#666]">mapbox</span>
      </div>
      <div className="absolute top-[21px] left-5 flex w-[30px] flex-col items-center rounded-[3px] bg-white shadow-[0_1px_2px_rgba(0,0,0,0.15)]">
        <button aria-label="Zoom in" className="flex size-[30px] items-center justify-center">
          <svg viewBox="0 0 12 12" className="size-3" stroke="#333" strokeWidth="1.300" aria-hidden="true"><path d="M6 0v12M0 6h12" /></svg>
        </button>
        <span className="h-px w-4 bg-[#c8c8c8]" />
        <button aria-label="Zoom out" className="flex h-[29px] w-[30px] items-center justify-center">
          <svg viewBox="0 0 12 12" className="size-3" stroke="#444" strokeWidth="1.600" aria-hidden="true"><path d="M1.500 6h9" /></svg>
        </button>
      </div>
      <div className={`absolute bottom-[5px] left-[5px] h-[17px] w-[87px] border-2 border-t-0 border-[#666] bg-white/60 pl-1 text-[11px] leading-4 text-[#444] ${UI}`}>
        500 m
      </div>
      <div className={`absolute top-5 right-[60px] flex h-[14px] w-[175px] items-center bg-[#f2f3ec]/80 pl-[7px] text-[10px] text-[#333] ${ARIAL}`}>
        <span className="mr-[7px] w-5 border-t-2 border-dotted border-[#b8254f]" />
        Низкая точность GPS-данных
      </div>
      <div className="absolute top-5 right-5 flex flex-col gap-[10px]">
        <button aria-label="Map settings" className={mapBtn}><GearIcon className="size-[22px]" /></button>
        <button aria-label="Full screen" className={mapBtn}>
          <svg viewBox="0 0 18 18" className="size-[18px]" fill="#1d1d1d" aria-hidden="true">
            <path d="M17 1l-2 7-2-1.800L10.500 8.800 9.200 7.500l2.600-2.600L10 3zM1 17l2-7 2 1.800 2.500-2.600 1.300 1.300-2.600 2.600L8 15z" />
          </svg>
        </button>
      </div>
      <button aria-label="Favourite route" className={`absolute top-[235px] right-5 ${mapBtn}`}><StarIcon className="size-[19px]" /></button>
      <div className={`absolute right-0 bottom-0 h-[17px] bg-white/70 px-[5px] text-[11px] leading-4 text-[#333] ${ARIAL}`}>
        <a href="#" className="text-[#1a7898]">© 2024 Mapbox</a> © <a href="#" className="text-[#1a7898]">OpenStreetMap</a>{" "}
        <a href="#" className="font-bold text-[#1a7898]">Improve this map</a>
      </div>
    </section>
  );
}

/* ---------- Heart-rate chart ---------- */

function HeartRate() {
  const zones = [
    { n: "5", color: "bg-[#d51359]" },
    { n: "4", color: "bg-[#f9be21]" },
  ];
  return (
    <section className={`flex shrink-0 ${ARIAL}`}>
      <svg viewBox="75 634 1010 120" preserveAspectRatio="xMinYMin slice" className="h-[120px] min-w-0 flex-1" role="img" aria-label="Значение ЧСС [уд./мин.]">
        <rect x="126" y="694" width="953" height="18" fill="#ebacc4" />
        <rect x="126" y="713" width="953" height="18" fill="#f1e0ad" />
        <rect x="126" y="731" width="953" height="24" fill="#d8e4b4" />
        <rect x="126" y="694" width="9" height="18" fill="#d51359" />
        <rect x="126" y="713" width="14" height="18" fill="#f9be21" />
        <path d="M304.500 685v70M484.500 685v70M663.500 685v70M843.500 685v70M1023.500 685v70" stroke="#bbb" strokeOpacity=".6" />
        <path d="M367.500 685v70M614.500 685v70M857.500 685v70" stroke="#333" strokeDasharray="3 2" />
        <path d="M125.500 755V684.500h954V755" fill="none" stroke="#7b7b7b" />
        <rect x="135" y="689" width="146" height="21" fill="#fff" fillOpacity=".7" />
        <g fontSize="12" fill="#777">
          <text x="138" y="703">Значение ЧСС [уд./мин.]</text>
          <text x="119" y="698" textAnchor="end">171</text>
          <text x="119" y="716" textAnchor="end">154</text>
          <text x="119" y="734" textAnchor="end">137</text>
        </g>
        {[
          [366, "1"],
          [613, "2"],
          [855, "3"],
        ].map(([x, n]) => (
          <g key={n}>
            <circle cx={x} cy="675" r="9.500" fill="#c9c9c9" />
            <circle cx={x} cy="674" r="9.500" fill="#fff" />
            <text x={x} y="679" textAnchor="middle" fontSize="14" fill="#333">{n}</text>
          </g>
        ))}
      </svg>
      <div className="ml-[6px] flex w-[174px] flex-col gap-px pt-[61px] text-[14px] text-[#777]">
        {zones.map((z) => (
          <div key={z.n} className="flex h-[21px] items-center">
            <span className={`mr-px flex h-full w-[17px] items-center justify-center text-white ${z.color}`}>{z.n}</span>
            <span className="flex h-full w-[86px] items-center bg-[#cbcbcb] pl-[5px] text-[12px] font-bold text-white">0 %</span>
            <span className="ml-[11px] text-[12px]">00:00:00</span>
          </div>
        ))}
      </div>
      <div className="flex flex-col gap-[10px] pt-[50px] pr-[15px] pl-[5px]">
        <button aria-label="Chart settings" className={mapBtn}><GearIcon className="size-[22px]" /></button>
        <button aria-label="Expand chart" className={mapBtn} />
      </div>
    </section>
  );
}

/* ---------- Desktop task bar ---------- */

function Taskbar() {
  const app = "flex h-full w-[62px] items-center justify-center";
  return (
    <footer className="flex h-10 shrink-0 border-t border-[#2b3037] bg-[linear-gradient(to_right,#07090d_0px,#0b0e13_300px,#8ea7bf_366px,#9fbbdb_480px,#7f9fb9_660px,#92b0cc_850px,#a0bfe4_1066px,#07090e_1074px,#080b10_100%)] shadow-[inset_0_1px_0_rgba(255,255,255,0.25)]">
      <button aria-label="Start" className="flex w-[54px] items-center justify-center">
        <svg viewBox="0 0 38 38" className="size-[38px]" aria-hidden="true">
          <defs>
            <radialGradient id="orb" cx=".5" cy=".9" r=".9">
              <stop offset="0" stopColor="#4fd4f5" />
              <stop offset=".5" stopColor="#1c5d8c" />
              <stop offset="1" stopColor="#7ba3bb" />
            </radialGradient>
          </defs>
          <circle cx="19" cy="19" r="17.500" fill="url(#orb)" stroke="#31536b" />
          <path d="M11 11q4-2 8 0l-2 8q-4-2-8 0z" fill="#ea6a2d" />
          <path d="M20.500 11.500q4 2 9-.5l-2 8q-5 2-9 .5z" fill="#8fc43f" />
          <path d="M8.500 20.500q4-2 8 0l-2 7.500q-4-2-8 0z" fill="#57a8e6" />
          <path d="M18 21q4 2 9-.5l-2 8q-5 2-9 .5z" fill="#fac938" />
        </svg>
      </button>
      <button aria-label="Viber" className="ml-1 flex w-[62px] items-center justify-center">
        <svg viewBox="0 0 32 34" className="h-[34px] w-8" aria-hidden="true">
          <path d="M16 1.500Q30 1.500 30 14.500T18 27l-8 6v-6Q2 25 2 14.500 2 1.500 16 1.500z" fill="#7360e8" stroke="#fff" strokeWidth="2.200" />
          <path d="M9.500 8l1.700-1 3 4-1.500 2q1.500 4 5 5.500l2-1.500 3.800 3-1.500 2.500Q17 24 12.500 18.500 8.500 13 9.500 8z" fill="#fff" />
          <path d="M17 6q8 .5 8 8M17 9q5 .5 5 5M17.500 12q2 .5 2 2" fill="none" stroke="#fff" strokeWidth="1" />
        </svg>
      </button>
      <button aria-label="Total Commander" className={app}>
        <svg viewBox="0 0 32 32" className="size-8" aria-hidden="true">
          <path d="M1 0h28l2 2v29H2L1 29z" fill="#2450c8" />
          <path d="M8 0h16v11H8z" fill="#c9d3e2" /><path d="M17 1h5v9h-5z" fill="#2850b8" />
          <path d="M4 14h24v16H4z" fill="#fff" />
          <path d="M5 17h22M5 21h22M5 25h10" stroke="#b62b2b" strokeWidth="1.200" />
          <text x="16" y="29" fontSize="7" fill="#222" className="font-['DejaVu_Sans_Mono',monospace]">64</text>
        </svg>
      </button>
      <button aria-label="Internet Explorer" className={app}>
        <svg viewBox="0 0 32 32" className="size-8" fill="none" aria-hidden="true">
          <path d="M26 22a10.500 10.500 0 1 1 1-5H10" stroke="#48bdf3" strokeWidth="5.500" />
          <path d="M5 28Q-1 25 10 13 25-1 30 3q1 2-1 6" stroke="#f3c52e" strokeWidth="2.400" />
        </svg>
      </button>
      <button aria-label="Opera" className="ml-[2px] flex h-full w-[58px] items-center justify-center rounded-[2px] border border-[#d8d8d8] bg-gradient-to-br from-[#d6d6d6] via-[#777] to-[#b6b6b6]">
        <OperaO className="size-[30px]" />
      </button>
      <button aria-label="Polar" className="ml-[3px] flex h-full w-[60px] items-center justify-center rounded-[2px] border border-[#3f4b57] bg-gradient-to-br from-[#c6d5e2] to-[#98b1c8]">
        <span className="flex size-[27px] items-center justify-center rounded-full bg-white"><PolarDot className="size-[23px]" /></span>
      </button>
      <div className={`ml-auto flex items-center text-white ${CHROME}`}>
        <button className="mb-1 text-[12px]">RU</button>
        <button aria-label="Hidden icons" className="ml-4 border-x-4 border-b-4 border-x-transparent border-b-white" />
        <svg viewBox="0 0 14 16" className="ml-[14px] h-4 w-[14px]" aria-label="Power">
          <path d="M4 2H1v13h8v-3" fill="none" stroke="#fff" strokeWidth="1.500" />
          <path d="M4 0h3v2H4zM6 5h1.500V2H9v3h2V2h1.500v3H14v4l-2 2h-2v4H9v-4l-2-1z" fill="#fff" />
        </svg>
        <svg viewBox="0 0 14 12" className="ml-[11px] h-3 w-[14px]" fill="#fff" aria-label="Network">
          <path d="M0 10h2v2H0zM3 8h2v4H3zM6 6h2v6H6zM9 3h2v9H9zM12 0h2v12h-2z" />
        </svg>
        <svg viewBox="0 0 16 14" className="ml-[9px] h-[14px] w-4" aria-label="Volume">
          <path d="M0 5h3l4-4v12L3 9H0z" fill="#fff" />
          <path d="M9 5q1.500 2 0 4M11 3.500q3 3.500 0 7M13 2q4 5 0 10" fill="none" stroke="#fff" />
        </svg>
        <div className="ml-[15px] flex w-[60px] flex-col items-center text-[12px] leading-[17px] whitespace-nowrap">
          <div>18:23</div>
          <div>30.04.2024</div>
        </div>
        <button aria-label="Show desktop" className="ml-[9px] h-10 w-[14px] border border-[#5b6168] bg-gradient-to-b from-[#4a4d51] to-[#0a0c0f]" />
      </div>
    </footer>
  );
}

export default function App() {
  return (
    <div className="flex h-screen flex-col overflow-hidden bg-[#f1f1f1]">
      <div className="flex min-h-0 flex-1">
        <Sidebar />
        <div className="flex min-w-0 flex-1 flex-col">
          <TabStrip />
          <AddressBar />
          <div className="flex min-h-0 flex-1">
            <div className="flex min-w-0 flex-1 flex-col overflow-hidden">
              <SiteHeader />
              <main className="flex min-h-0 flex-1 flex-col overflow-hidden pr-[34px] pl-[35px]">
                <TrainingHeading />
                <Summary />
                <RouteMap />
                <HeartRate />
              </main>
            </div>
            <div className="flex w-[17px] shrink-0 flex-col items-center justify-between bg-[#f1f1f1] py-[7px]">
              <span className="border-x-4 border-b-4 border-x-transparent border-b-[#505050]" />
              <span className="mt-[18px] mb-auto h-[283px] w-[13px] bg-[#c1c1c1]" />
              <span className="border-x-4 border-t-4 border-x-transparent border-t-[#505050]" />
            </div>
          </div>
        </div>
      </div>
      <Taskbar />
    </div>
  );
}
